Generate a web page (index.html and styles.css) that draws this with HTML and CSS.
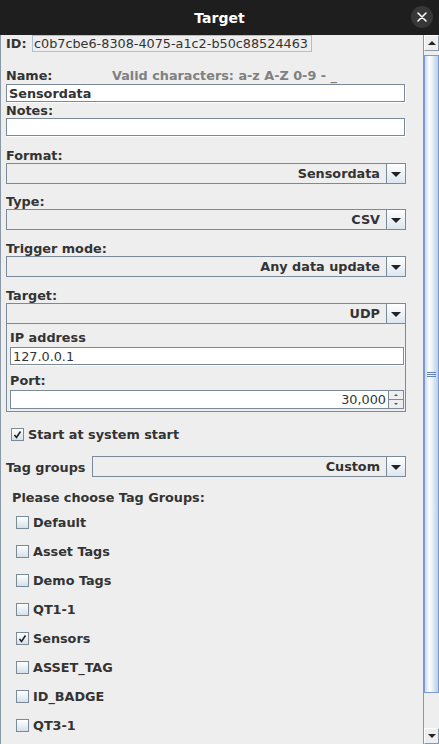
FILE: index.html
```html
<!DOCTYPE html>
<html>
<head>
<meta charset="utf-8">
<link rel="stylesheet" href="styles.css">
</head>
<body>
<div class="window">
  <div class="titlebar">
    <span class="title">Target</span>
    <span class="close"><svg width="10" height="10" viewBox="0 0 10 10"><path d="M1 1L9 9M9 1L1 9" stroke="#ffffff" stroke-width="1.6" stroke-linecap="round"/></svg></span>
  </div>
  <div class="main">
    <div class="content">
      <div class="id-row"><span class="lbl id-lbl">ID:</span><span class="id-box">c0b7cbe6-8308-4075-a1c2-b50c88524463</span></div>

      <div class="lbl name-row"><span>Name:</span><span class="hint">Valid characters: a-z A-Z 0-9 - _</span></div>
      <div class="field bold">Sensordata</div>
      <div class="lbl notes-lbl">Notes:</div>
      <div class="field"></div>

      <div class="lbl sec">Format:</div>
      <div class="combo"><span class="combo-val">Sensordata</span><span class="combo-btn"><i class="tri"></i></span></div>
      <div class="lbl sec2">Type:</div>
      <div class="combo"><span class="combo-val">CSV</span><span class="combo-btn"><i class="tri"></i></span></div>
      <div class="lbl sec3">Trigger mode:</div>
      <div class="combo"><span class="combo-val">Any data update</span><span class="combo-btn"><i class="tri"></i></span></div>
      <div class="lbl sec3">Target:</div>
      <div class="combo"><span class="combo-val">UDP</span><span class="combo-btn"><i class="tri"></i></span></div>
      <div class="panel">
        <div class="lbl ip-lbl">IP address</div>
        <div class="field plain">127.0.0.1</div>
        <div class="lbl port-lbl">Port:</div>
        <div class="spinner"><span class="spin-val">30,000</span><span class="spin-btns"><span class="spin-b"><i class="stri up"></i></span><span class="spin-b"><i class="stri down"></i></span></span></div>
      </div>

      <div class="check-row start"><span class="cb checked"><svg width="11" height="11" viewBox="0 0 11 11"><path d="M2.5 6L4.5 8.5L8.5 2.5" stroke="#222" stroke-width="1.6" fill="none"/></svg></span><span class="lbl">Start at system start</span></div>

      <div class="tg-row"><span class="lbl tg-lbl">Tag groups</span><div class="combo tg-combo"><span class="combo-val">Custom</span><span class="combo-btn"><i class="tri"></i></span></div></div>

      <div class="lbl choose">Please choose Tag Groups:</div>
      <div class="groups">
        <div class="check-row g"><span class="cb"></span><span class="lbl">Default</span></div>
        <div class="check-row g"><span class="cb"></span><span class="lbl">Asset Tags</span></div>
        <div class="check-row g"><span class="cb"></span><span class="lbl">Demo Tags</span></div>
        <div class="check-row g"><span class="cb"></span><span class="lbl">QT1-1</span></div>
        <div class="check-row g"><span class="cb checked"><svg width="11" height="11" viewBox="0 0 11 11"><path d="M2.5 6L4.5 8.5L8.5 2.5" stroke="#222" stroke-width="1.6" fill="none"/></svg></span><span class="lbl">Sensors</span></div>
        <div class="check-row g"><span class="cb"></span><span class="lbl">ASSET_TAG</span></div>
        <div class="check-row g"><span class="cb"></span><span class="lbl">ID_BADGE</span></div>
        <div class="check-row g"><span class="cb"></span><span class="lbl">QT3-1</span></div>
      </div>
    </div>
    <div class="scrollbar">
      <div class="sb-btn"><i class="sb-up"></i></div>
      <div class="sb-track">
        <div class="sb-thumb"><span class="grip"></span></div>
      </div>
      <div class="sb-btn"><i class="sb-down"></i></div>
    </div>
  </div>
</div>
</body>
</html>
```
FILE: styles.css
```css
* { box-sizing: border-box; }
html, body { margin: 0; padding: 0; background: #eeeeee; }
body { font-family: "DejaVu Sans", sans-serif; font-size: 12.8px; color: #333333; }
.window { width: 439px; height: 744px; display: flex; flex-direction: column; overflow: hidden; background: #1e1e1e; }
.titlebar { height: 35px; background: #1e1e1e; border-radius: 10px 10px 0 0; position: relative; display: flex; align-items: center; justify-content: center; }
.title { color: #ffffff; font-weight: bold; font-size: 14px; font-family: "DejaVu Sans", sans-serif; }
.close { position: absolute; right: 6px; top: 6px; width: 22px; height: 22px; border-radius: 50%; background: #373737; display: flex; align-items: center; justify-content: center; }
.main { flex: 1; display: flex; background: #eeeeee; border-left: 1px solid #8b98a5; min-height: 0; }
.content { flex: 1; padding: 0 17px 0 5px; min-width: 0; }
.lbl { font-weight: bold; line-height: 18px; height: 16px; white-space: nowrap; }
.id-row { display: flex; align-items: center; height: 17px; }
.id-lbl { width: 26px; line-height: 17px; height: 17px; }
.id-box { height: 17px; width: 280px; border: 1px solid #a8c0dc; padding: 0 0 0 1px; line-height: 16px; white-space: nowrap; }
.name-row { display: flex; margin-top: 15px; height: 17px; line-height: 18px; }
.name-row > span:first-child { width: 106px; }
.hint { color: #808080; }
.field { height: 18px; background: #ffffff; border: 1px solid #7a8a99; box-shadow: 1px 1px 0 #ffffff; padding-left: 2px; line-height: 17px; white-space: nowrap; width: 399px; }
.field.bold { font-weight: bold; }
.sec { margin-top: 11px; }
.sec2 { margin-top: 9px; }
.sec3 { margin-top: 10px; }
.combo { height: 21px; width: 400px; border: 1px solid #7a8a99; display: flex; background: #eeeeee; }
.combo-val { flex: 1; text-align: right; font-weight: bold; line-height: 20px; padding-right: 6px; white-space: nowrap; }
.combo-btn { width: 19px; border-left: 1px solid #7a8a99; background: linear-gradient(#ffffff, #dce6f0); display: flex; align-items: center; justify-content: center; }
.tri { width: 0; height: 0; border-left: 5px solid transparent; border-right: 5px solid transparent; border-top: 5px solid #222222; margin-top: 1px; }
.panel { width: 400px; border: 1px solid #7a8a99; border-top: none; padding: 5px 1px 2px 3px; }
.panel .field { width: 394px; margin-top: 2px; }
.field.plain { font-weight: normal; padding-left: 2px; }
.port-lbl { margin-top: 7px; }
.spinner { width: 394px; height: 19px; margin-top: 2px; display: flex; border: 1px solid #7a8a99; background: #ffffff; }
.spin-val { flex: 1; text-align: right; line-height: 18px; padding-right: 2px; }
.spin-btns { width: 15px; display: flex; flex-direction: column; border-left: 1px solid #7a8a99; background: #eeeeee; }
.spin-b { flex: 1; display: flex; align-items: center; justify-content: center; }
.spin-b + .spin-b { border-top: 1px solid #7a8a99; }
.stri { width: 0; height: 0; border-left: 2px solid transparent; border-right: 2px solid transparent; }
.stri.up { border-bottom: 2px solid #555; }
.stri.down { border-top: 2px solid #555; }
.check-row { display: flex; align-items: center; height: 16px; }
.check-row .lbl { line-height: 18px; height: 16px; }
.check-row.start { margin-top: 14px; padding-left: 5px; }
.cb { width: 13px; height: 13px; border: 1px solid #7a8a99; background: linear-gradient(#ffffff, #d6e0ea); margin-right: 4px; display: flex; align-items: center; justify-content: center; flex: none; }
.tg-row { display: flex; align-items: center; margin-top: 14px; }
.tg-lbl { width: 86px; }
.tg-combo { width: 314px; }
.choose { margin-top: 12px; padding-left: 6px; }
.groups { padding-left: 10px; }
.check-row.g { margin-top: 13px; }
.check-row.g:first-child { margin-top: 9px; }
.scrollbar { width: 16px; display: flex; flex-direction: column; border-left: 1px solid #8b98a5; background: #eeeeee; }
.sb-btn { height: 16px; flex: none; background: #eeeeee; border: 1px solid #ffffff; border-right-color: #8b98a5; border-bottom-color: #8b98a5; display: flex; align-items: center; justify-content: center; }
.sb-up { width: 0; height: 0; border-left: 4px solid transparent; border-right: 4px solid transparent; border-bottom: 4px solid #222; }
.sb-down { width: 0; height: 0; border-left: 4px solid transparent; border-right: 4px solid transparent; border-top: 4px solid #222; }
.sb-track { flex: 1; padding: 4px 0 35px 0; display: flex; }
.sb-thumb { flex: 1; border: 1px solid #7c9ad5; background: linear-gradient(90deg, #c8dbee, #ffffff 35%, #b8cfe5); display: flex; align-items: center; justify-content: center; }
.grip { width: 9px; height: 5px; border-top: 1px solid #6382bf; border-bottom: 1px solid #6382bf; position: relative; }
.grip::after { content: ""; position: absolute; left: 0; right: 0; top: 1px; height: 1px; background: #6382bf; }
```
